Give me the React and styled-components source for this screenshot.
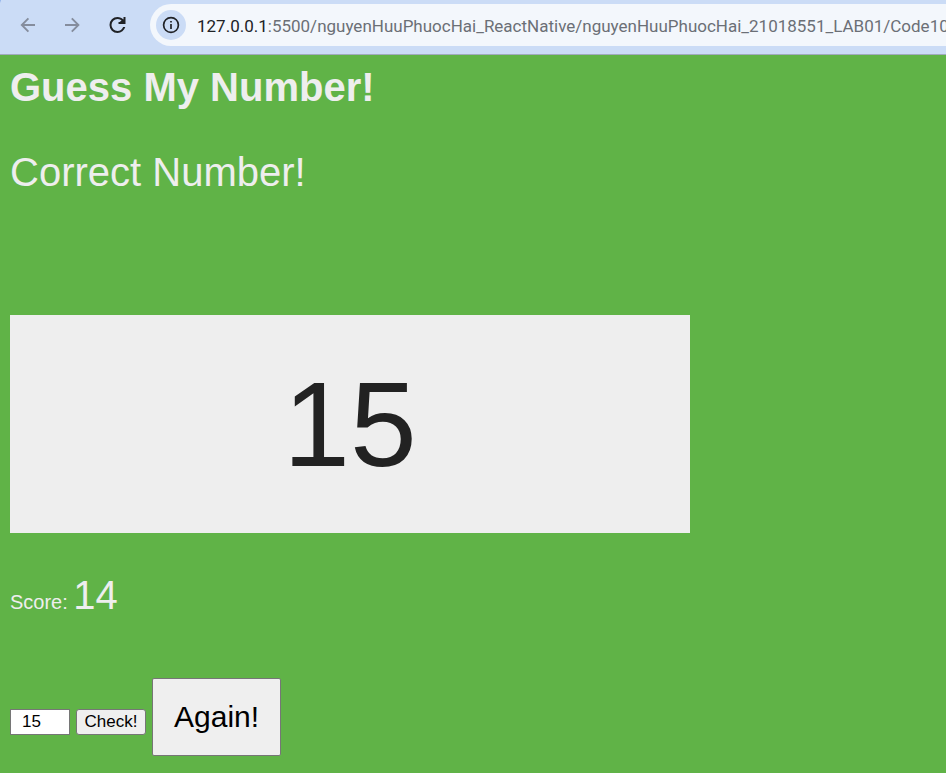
import { useState } from "react";
import styled, { createGlobalStyle } from "styled-components";

const GlobalStyle = createGlobalStyle`
  *, *::before, *::after { box-sizing: border-box; }
  html, body { margin: 0; background: #60b347; }
  body { font-family: "Liberation Sans", Arial, sans-serif; }
`;

const Page = styled.div`
  display: flex;
  flex-direction: column;
  min-height: 100vh;
`;

const Toolbar = styled.header`
  display: flex;
  align-items: center;
  height: 55px;
  padding: 0 0 4px 11px;
  background: linear-gradient(#8fb1ea, #cbdcf6) 0 0 / 1px 3px no-repeat, #cbdcf6;
  border-bottom: 1px solid #a0aabd;
`;

const NavButtons = styled.nav`
  display: flex;
  gap: 13px;
`;

const NavButton = styled.button`
  display: flex;
  align-items: center;
  justify-content: center;
  width: 32px;
  height: 32px;
  padding: 0;
  border: 0;
  border-radius: 50%;
  background: none;
  color: #202226;

  &:disabled { color: #858d9d; }
`;

const AddressBar = styled.div`
  display: flex;
  flex: 1;
  align-items: center;
  gap: 11px;
  min-width: 0;
  height: 42px;
  margin-left: 17px;
  padding-left: 6px;
  border-radius: 21px 0 0 21px;
  background: #f3f7fc;
`;

const SiteInfoButton = styled.button`
  display: flex;
  flex: none;
  align-items: center;
  justify-content: center;
  width: 30px;
  height: 30px;
  padding: 0;
  border: 0;
  border-radius: 50%;
  background: #cbdcf6;
  color: #202226;
`;

const Url = styled.div`
  flex: 1;
  min-width: 0;
  padding-top: 2px;
  overflow: hidden;
  white-space: nowrap;
  font-family: "Segoe UI", Roboto, sans-serif;
  font-size: 17px;
  line-height: 26px;
  color: #6b6f76;
`;

const Host = styled.span`
  color: #202226;
`;

const Game = styled.main`
  flex: 1;
  padding: 9px 10px 17px;
  color: #eee;
`;

const Title = styled.h1`
  margin: 0;
  font-size: 40px;
  line-height: 46px;
`;

const Message = styled.p`
  margin: 39px 0 0;
  font-size: 40px;
  line-height: 46px;
`;

const NumberBox = styled.div`
  max-width: 680px;
  margin-top: 120px;
  padding: 40px;
  background: #eee;
  color: #222;
  font-size: 120px;
  line-height: 138px;
  text-align: center;
`;

const ScoreLine = styled.p`
  margin: 39px 0 0;
  font-size: 20px;
  line-height: 46px;
`;

const Score = styled.span`
  font-size: 40px;
`;

const Controls = styled.form`
  display: flex;
  align-items: baseline;
  gap: 6px;
  margin-top: 53px;
`;

const GuessInput = styled.input`
  width: 60px;
  height: 26px;
  padding: 0 11px;
  border: 1px solid #767676;
  border-radius: 0;
  background: #fff;
  color: #000;
  font-family: inherit;
  font-size: 17px;
  appearance: textfield;

  &::-webkit-inner-spin-button { appearance: none; margin: 0; }
`;

const GameButton = styled.button`
  min-width: 70px;
  padding: ${({ $large }) => ($large ? "20px 21px" : "2px 7px")};
  border: 1px solid #767676;
  border-radius: ${({ $large }) => ($large ? "2px" : "3px")};
  background: #efefef;
  color: #000;
  font-family: inherit;
  font-size: ${({ $large }) => ($large ? "30px" : "17px")};
  line-height: ${({ $large }) => ($large ? "36px" : "20px")};
`;

const Arrow = ({ forward }) => (
  <svg width="20" height="20" viewBox="0 0 20 20" fill="none" stroke="currentColor" strokeWidth="1.9" aria-hidden="true">
    {forward ? <path d="M3 10H16.5M9.8 3.3L16.4 10L9.8 16.7" /> : <path d="M18 10H4.7M11.4 3.3L4.8 10L11.4 16.7" />}
  </svg>
);

const Reload = () => (
  <svg width="24" height="24" viewBox="0 0 24 24" fill="currentColor" aria-hidden="true">
    <path d="M12.5 20q-3.35 0-5.675-2.325T4.5 12t2.325-5.675T12.5 4q1.725 0 3.3.7125T18.5 6.75V4h2v7h-7V9h4.2q-.8-1.4-2.1875-2.2T12.5 6Q10 6 8.25 7.75T6.5 12t1.75 4.25T12.5 18q1.925 0 3.475-1.1T18.15 14h2.1q-.7 2.65-2.85 4.325T12.5 20Z" />
    <path d="M14 9.5L18.5 6V9.5Z" />
  </svg>
);

const Info = () => (
  <svg width="20" height="20" viewBox="0 0 20 20" fill="none" stroke="currentColor" strokeWidth="1.7" aria-hidden="true">
    <circle cx="10" cy="10" r="7.4" />
    <path d="M10 9V14M10 6V7.6" />
  </svg>
);

export default function App() {
  const [guess, setGuess] = useState("15");

  return (
    <Page>
      <GlobalStyle />
      <Toolbar>
        <NavButtons aria-label="Browser navigation">
          <NavButton type="button" aria-label="Back" disabled><Arrow /></NavButton>
          <NavButton type="button" aria-label="Forward" disabled><Arrow forward /></NavButton>
          <NavButton type="button" aria-label="Reload"><Reload /></NavButton>
        </NavButtons>
        <AddressBar>
          <SiteInfoButton type="button" aria-label="View site information"><Info /></SiteInfoButton>
          <Url>
            <Host>127.0.0.1</Host>:5500/nguyenHuuPhuocHai_ReactNative/nguyenHuuPhuocHai_21018551_LAB01/Code10
          </Url>
        </AddressBar>
      </Toolbar>
      <Game>
        <Title>Guess My Number!</Title>
        <Message>Correct Number!</Message>
        <NumberBox>15</NumberBox>
        <ScoreLine>Score: <Score>14</Score></ScoreLine>
        <Controls onSubmit={(event) => event.preventDefault()}>
          <GuessInput
            type="number"
            aria-label="Your guess"
            value={guess}
            onChange={(event) => setGuess(event.target.value)}
          />
          <GameButton type="submit">Check!</GameButton>
          <GameButton type="button" $large>Again!</GameButton>
        </Controls>
      </Game>
    </Page>
  );
}
